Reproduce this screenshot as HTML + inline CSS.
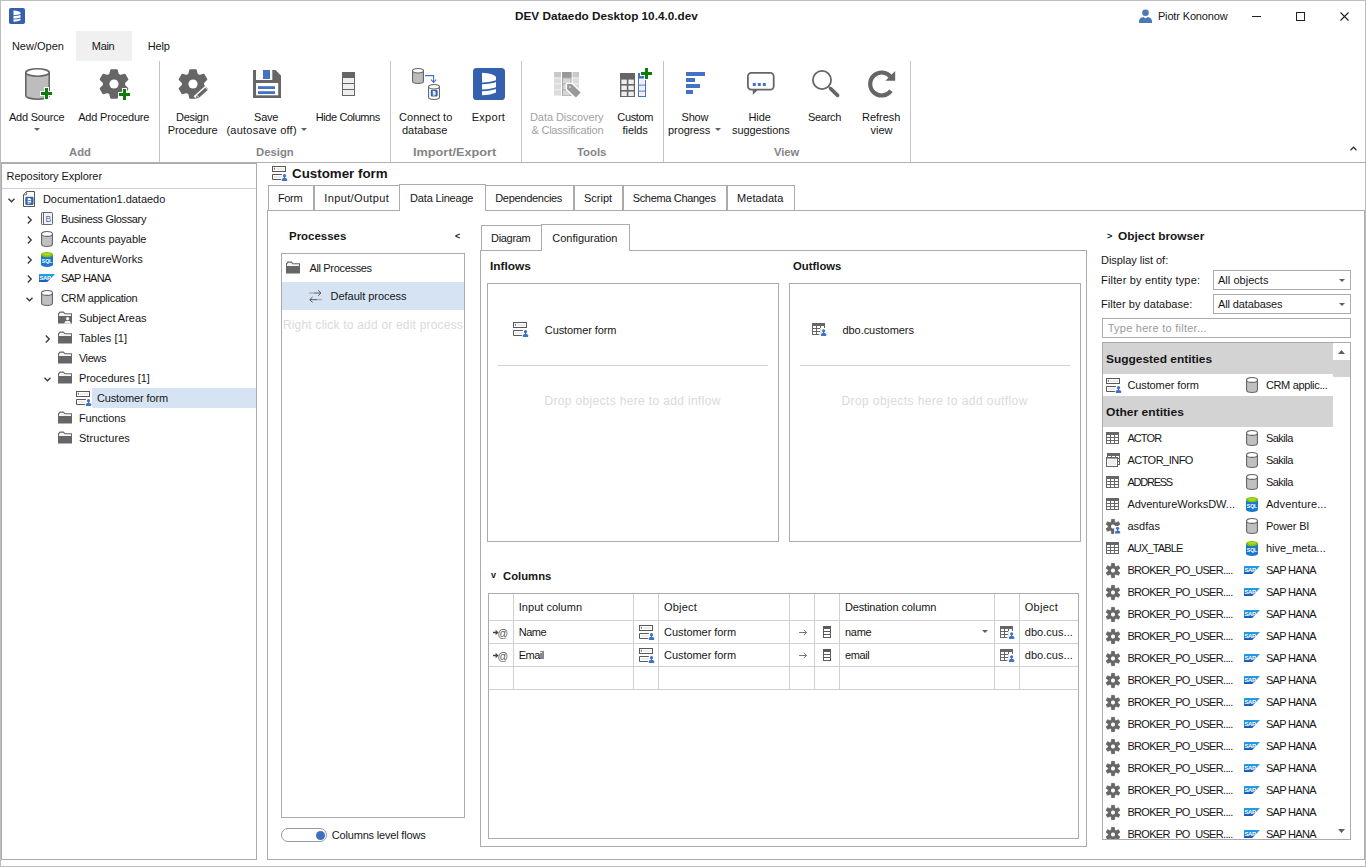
<!DOCTYPE html>
<html lang="en"><head><meta charset="utf-8"><title>DEV Dataedo Desktop 10.4.0.dev</title>
<style>
html,body{margin:0;padding:0;background:#fff;}
body{width:1366px;height:867px;position:relative;overflow:hidden;font-family:"Liberation Sans",sans-serif;font-size:11px;color:#161616;}
.a{position:absolute;}
.t{position:absolute;white-space:nowrap;line-height:13px;font-size:11px;}
.c{text-align:center;}
.b{font-weight:bold;}
.dis{color:#a2a2a2;}
.grp{color:#858585;}
.up{letter-spacing:-0.55px;}
svg{display:block;}
</style></head>
<body>
<div class="a" style="left:0px;top:0px;width:1366px;height:867px;background:#ffffff;border:1px solid #bdbdbd;box-sizing:border-box;"></div>
<svg style="position:absolute;left:9px;top:8px;overflow:visible" width="16" height="16" viewBox="0 0 16 16" ><g transform="scale(0.5)"><rect x="0" y="0" width="32" height="32" rx="3.6" fill="#3560ae"/><path fill="#fff" d="M9,4.8 Q20,5.4 23,8.8 L23,12.2 Q18,14 9,14.4 ZM9,16.2 Q18,16 23,14 L23,19.2 Q18,21.1 9,21.4 ZM9,23.2 Q18,23 23,21.1 L23,24.6 Q18,27 9,27.3 Z"/></g></svg>
<span class="t b" style="left:514.7px;top:10px;transform:scaleX(1.0674);transform-origin:0 0;">DEV Dataedo Desktop 10.4.0.dev</span>
<svg style="position:absolute;left:1139px;top:9px;overflow:visible" width="13" height="14" viewBox="0 0 13 14" ><circle cx="6.5" cy="3.8" r="3.3" fill="#4a7ab5"/><path d="M0,14 L13,14 L13,12 Q12.6,8.4 8.6,8 L6.5,9.6 L4.4,8 Q0.4,8.4 0,12 Z" fill="#4a7ab5"/></svg>
<span class="t " style="left:1157.9px;top:10px;letter-spacing:-0.146px;">Piotr Kononow</span>
<div class="a" style="left:1252px;top:16px;width:9px;height:1px;background:#222"></div>
<div class="a" style="left:1296px;top:12px;width:9px;height:9px;border:1px solid #222;box-sizing:border-box;"></div>
<svg style="position:absolute;left:1340px;top:12px;overflow:visible" width="9" height="9" viewBox="0 0 9 9" ><path d="M0.5,0.5 L8.5,8.5 M8.5,0.5 L0.5,8.5" stroke="#222" stroke-width="1.1" fill="none"/></svg>
<div class="a" style="left:76px;top:31px;width:56px;height:30px;background:#f0f0f0;"></div>
<span class="t " style="left:11.9px;top:40px;letter-spacing:0.002px;">New/Open</span>
<span class="t " style="left:91.8px;top:40px;letter-spacing:-0.315px;">Main</span>
<span class="t " style="left:147.7px;top:40px;letter-spacing:-0.108px;">Help</span>
<svg style="position:absolute;left:25px;top:68px;overflow:visible" width="25" height="32" viewBox="0 0 25 32" ><path d="M0.8,4.5 L0.8,27.5 A11.7,3.7 0 0 0 24.2,27.5 L24.2,4.5 Z" fill="#bdbdbd" stroke="#666666" stroke-width="1.6"/><ellipse cx="12.5" cy="4.5" rx="11.7" ry="3.7" fill="#fff" stroke="#666666" stroke-width="1.6"/><rect x="19.0" y="19" width="5" height="13" fill="#fff"/><rect x="15" y="23.0" width="13" height="5" fill="#fff"/><rect x="20.0" y="20" width="3" height="11" fill="#0b7d0b"/><rect x="16" y="24.0" width="11" height="3" fill="#0b7d0b"/></svg>
<svg style="position:absolute;left:100px;top:69px;overflow:visible" width="30" height="30" viewBox="0 0 30 30" ><path d="M9.95,5.42 L11.09,1.00 L16.91,1.00 L18.05,5.42 L20.27,6.70 L24.67,5.48 L27.58,10.52 L24.32,13.72 L24.32,16.28 L27.58,19.48 L24.67,24.52 L20.27,23.30 L18.05,24.58 L16.91,29.00 L11.09,29.00 L9.95,24.58 L7.73,23.30 L3.33,24.52 L0.42,19.48 L3.68,16.28 L3.68,13.72 L0.42,10.52 L3.33,5.48 L7.73,6.70 Z M18.60,15.00 A4.6,4.6 0 1 0 9.40,15.00 A4.6,4.6 0 1 0 18.60,15.00 Z" fill="#666666" fill-rule="evenodd" stroke="#666666" stroke-width="1.6" stroke-linejoin="round"/><circle cx="14" cy="15" r="4.6" fill="#fff"/><rect x="22.0" y="19" width="5" height="13" fill="#fff"/><rect x="18" y="23.0" width="13" height="5" fill="#fff"/><rect x="23.0" y="20" width="3" height="11" fill="#0b7d0b"/><rect x="19" y="24.0" width="11" height="3" fill="#0b7d0b"/></svg>
<svg style="position:absolute;left:179px;top:69px;overflow:visible" width="30" height="31" viewBox="0 0 30 31" ><path d="M9.95,5.42 L11.09,1.00 L16.91,1.00 L18.05,5.42 L20.27,6.70 L24.67,5.48 L27.58,10.52 L24.32,13.72 L24.32,16.28 L27.58,19.48 L24.67,24.52 L20.27,23.30 L18.05,24.58 L16.91,29.00 L11.09,29.00 L9.95,24.58 L7.73,23.30 L3.33,24.52 L0.42,19.48 L3.68,16.28 L3.68,13.72 L0.42,10.52 L3.33,5.48 L7.73,6.70 Z M18.60,15.00 A4.6,4.6 0 1 0 9.40,15.00 A4.6,4.6 0 1 0 18.60,15.00 Z" fill="#666666" fill-rule="evenodd" stroke="#666666" stroke-width="1.6" stroke-linejoin="round"/><circle cx="14" cy="15" r="4.6" fill="#fff"/><line x1="16.6" y1="29.4" x2="28.6" y2="18.8" stroke="#fff" stroke-width="6"/><line x1="19.2" y1="27.2" x2="28.2" y2="19.2" stroke="#666" stroke-width="3.4"/><path d="M16.4,29.8 L17.4,26.2 L20.4,29 Z" fill="#888"/><line x1="26.2" y1="18.2" x2="29.2" y2="21.4" stroke="#fff" stroke-width="0.8"/></svg>
<svg style="position:absolute;left:253px;top:70px;overflow:visible" width="28" height="28" viewBox="0 0 28 28" ><path d="M0,0 L3,0 L3,10 L19.3,10 L19.3,0 L22.5,0 L28,5.5 L28,28 L0,28 Z" fill="#666"/><rect x="10" y="0" width="7" height="9" fill="#4472c4"/><rect x="3" y="13" width="22.2" height="12.3" fill="#fff"/><rect x="5" y="16.2" width="17" height="2.8" fill="#4472c4"/><rect x="5" y="21.2" width="17" height="2.8" fill="#4472c4"/></svg>
<svg style="position:absolute;left:342px;top:72px;overflow:visible" width="13" height="24" viewBox="0 0 13 24" ><rect x="0" y="0" width="13" height="24" fill="#666"/><rect x="1" y="6" width="11" height="5" fill="#efefef"/><rect x="1" y="12" width="11" height="5" fill="#efefef"/><rect x="1" y="18" width="11" height="5" fill="#efefef"/></svg>
<svg style="position:absolute;left:412px;top:68px;overflow:visible" width="28" height="32" viewBox="0 0 28 32" ><g><path d="M0.55,2.75 L0.55,13.25 A5.45,2.2 0 0 0 11.45,13.25 L11.45,2.75 Z" fill="#bdbdbd" stroke="#666666" stroke-width="1.1"/><ellipse cx="6.0" cy="2.75" rx="5.45" ry="2.2" fill="#fff" stroke="#666666" stroke-width="1.1"/></g><path d="M13,7.6 L21.6,7.6 L21.6,14" fill="none" stroke="#4472c4" stroke-width="1.1"/><path d="M19,11.6 L21.6,14.4 L24.2,11.6" fill="none" stroke="#4472c4" stroke-width="1.1"/><g transform="translate(16,16)"><path d="M0.55,2.75 L0.55,13.25 A5.45,2.2 0 0 0 11.45,13.25 L11.45,2.75 Z" fill="#fff" stroke="#666666" stroke-width="1.1"/><ellipse cx="6.0" cy="2.75" rx="5.45" ry="2.2" fill="#fff" stroke="#666666" stroke-width="1.1"/><g transform="translate(2.8,5.8)"><g transform="scale(0.2125)"><rect x="0" y="0" width="32" height="32" rx="5" fill="#3560ae"/><path fill="#fff" d="M9,4.8 Q20,5.4 23,8.8 L23,12.2 Q18,14 9,14.4 ZM9,16.2 Q18,16 23,14 L23,19.2 Q18,21.1 9,21.4 ZM9,23.2 Q18,23 23,21.1 L23,24.6 Q18,27 9,27.3 Z"/></g></g></g></svg>
<svg style="position:absolute;left:473px;top:68px;overflow:visible" width="32" height="32" viewBox="0 0 32 32" ><g transform="scale(1.0)"><rect x="0" y="0" width="32" height="32" rx="3.6" fill="#3560ae"/><path fill="#fff" d="M9,4.8 Q20,5.4 23,8.8 L23,12.2 Q18,14 9,14.4 ZM9,16.2 Q18,16 23,14 L23,19.2 Q18,21.1 9,21.4 ZM9,23.2 Q18,23 23,21.1 L23,24.6 Q18,27 9,27.3 Z"/></g></svg>
<svg style="position:absolute;left:554px;top:72px;overflow:visible" width="28" height="27" viewBox="0 0 28 27" ><rect x="0" y="0" width="7" height="5.5" fill="#c9c9c9"/><rect x="0" y="6.2" width="7" height="5.4" fill="#dcdcdc"/><rect x="0" y="12.2" width="7" height="5.4" fill="#dcdcdc"/><rect x="0" y="18.2" width="7" height="5.4" fill="#dcdcdc"/><rect x="8" y="0" width="9.5" height="24" fill="#a8a8a8"/><rect x="8" y="0" width="9.5" height="5.5" fill="#999"/><rect x="9" y="6.4" width="7.5" height="5" fill="#d6d6d6"/><rect x="9" y="12.4" width="7.5" height="5" fill="#d6d6d6"/><rect x="9" y="18.4" width="7.5" height="5" fill="#d6d6d6"/><rect x="18.5" y="0" width="6.5" height="5.5" fill="#c9c9c9"/><rect x="18.5" y="6.2" width="6.5" height="5.4" fill="#dcdcdc"/><rect x="18.5" y="12.2" width="6.5" height="5.4" fill="#dcdcdc"/><rect x="18.5" y="18.2" width="6.5" height="5.4" fill="#dcdcdc"/><path d="M12.4,11.4 L18.2,11.4 L27.6,20.4 L22,26.4 L12.4,17.4 Z" fill="#999" stroke="#fff" stroke-width="1.4" stroke-linejoin="round"/><circle cx="16" cy="15" r="0.9" fill="#ddd"/></svg>
<svg style="position:absolute;left:620px;top:68px;overflow:visible" width="32" height="30" viewBox="0 0 32 30" ><rect x="0" y="5" width="15" height="24" fill="#666"/><rect x="1.4" y="11.6" width="5.4" height="4.4" fill="#efefef"/><rect x="8.4" y="11.6" width="5.4" height="4.4" fill="#efefef"/><rect x="1.4" y="17.6" width="5.4" height="4.4" fill="#efefef"/><rect x="8.4" y="17.6" width="5.4" height="4.4" fill="#efefef"/><rect x="1.4" y="23.6" width="5.4" height="4.4" fill="#efefef"/><rect x="8.4" y="23.6" width="5.4" height="4.4" fill="#efefef"/><rect x="18.5" y="5.5" width="7" height="23" fill="#fff" stroke="#4472c4" stroke-width="1"/><rect x="18" y="5" width="8" height="5.6" fill="#4472c4"/><rect x="19.6" y="12" width="4.8" height="4" fill="#efefef"/><rect x="18" y="16.6" width="8" height="1" fill="#4472c4"/><rect x="19.6" y="18" width="4.8" height="4" fill="#efefef"/><rect x="18" y="22.6" width="8" height="1" fill="#4472c4"/><rect x="19.6" y="24" width="4.8" height="4" fill="#efefef"/><rect x="24.0" y="-1" width="5" height="13" fill="#fff"/><rect x="20" y="3.0" width="13" height="5" fill="#fff"/><rect x="25.0" y="0" width="3" height="11" fill="#0b7d0b"/><rect x="21" y="4.0" width="11" height="3" fill="#0b7d0b"/></svg>
<svg style="position:absolute;left:686px;top:72px;overflow:visible" width="19" height="22" viewBox="0 0 19 22" ><rect x="0" y="0" width="19" height="4" fill="#4472c4"/><rect x="0" y="6" width="9" height="4" fill="#4472c4"/><rect x="0" y="12" width="14" height="4" fill="#4472c4"/><rect x="0" y="18" width="7" height="4" fill="#4472c4"/></svg>
<svg style="position:absolute;left:747px;top:72px;overflow:visible" width="28" height="24" viewBox="0 0 28 24" ><path d="M5.8,17.5 L5.8,23 L11.2,17.5" fill="#666"/><rect x="0.9" y="0.9" width="25.8" height="16.8" rx="3.4" fill="#fff" stroke="#666" stroke-width="1.8"/><rect x="5.8" y="11" width="3" height="3" fill="#4472c4"/><rect x="10.8" y="11" width="3" height="3" fill="#4472c4"/><rect x="15.8" y="11" width="3" height="3" fill="#4472c4"/></svg>
<svg style="position:absolute;left:812px;top:70px;overflow:visible" width="28" height="28" viewBox="0 0 28 28" ><circle cx="10" cy="10" r="9.1" fill="none" stroke="#666" stroke-width="1.8"/><line x1="17" y1="17" x2="18.5" y2="18.5" stroke="#666" stroke-width="1.8"/><line x1="18.6" y1="18.6" x2="25.6" y2="25.4" stroke="#666" stroke-width="3.6" stroke-linecap="round"/></svg>
<svg style="position:absolute;left:868px;top:70px;overflow:visible" width="28" height="28" viewBox="0 0 28 28" ><path d="M22.76,6.92 A11.5,11.5 0 1 0 23.00,20.76" fill="none" stroke="#666" stroke-width="4.2"/><path d="M27.2,1 L27.2,10.8 L17.4,10.8 Z" fill="#666"/></svg>
<span class="t " style="left:8.9px;top:111px;letter-spacing:-0.198px;">Add Source</span>
<span class="t " style="left:78.2px;top:111px;letter-spacing:-0.174px;">Add Procedure</span>
<span class="t " style="left:176.0px;top:111px;letter-spacing:-0.290px;">Design</span>
<span class="t " style="left:167.8px;top:124px;letter-spacing:-0.121px;">Procedure</span>
<span class="t " style="left:254.1px;top:111px;letter-spacing:-0.259px;">Save</span>
<span class="t " style="left:226.4px;top:124px;letter-spacing:0.241px;">(autosave off)</span>
<span class="t " style="left:315.8px;top:111px;letter-spacing:-0.418px;">Hide Columns</span>
<span class="t " style="left:399.1px;top:111px;letter-spacing:-0.000px;">Connect to</span>
<span class="t " style="left:402.0px;top:124px;letter-spacing:0.005px;">database</span>
<span class="t " style="left:471.7px;top:111px;letter-spacing:0.281px;">Export</span>
<span class="t dis" style="left:530.0px;top:111px;letter-spacing:-0.075px;">Data Discovery</span>
<span class="t dis" style="left:531.4px;top:124px;letter-spacing:-0.200px;">&amp; Classification</span>
<span class="t " style="left:617.3px;top:111px;letter-spacing:-0.341px;">Custom</span>
<span class="t " style="left:622.6px;top:124px;letter-spacing:-0.098px;">fields</span>
<span class="t " style="left:681.6px;top:111px;letter-spacing:-0.244px;">Show</span>
<span class="t " style="left:668.0px;top:124px;letter-spacing:-0.071px;">progress</span>
<span class="t " style="left:748.5px;top:111px;letter-spacing:-0.075px;">Hide</span>
<span class="t " style="left:732.0px;top:124px;letter-spacing:-0.102px;">suggestions</span>
<span class="t " style="left:808.0px;top:111px;letter-spacing:-0.292px;">Search</span>
<span class="t " style="left:862.0px;top:111px;letter-spacing:-0.022px;">Refresh</span>
<span class="t " style="left:870.4px;top:124px;letter-spacing:0.028px;">view</span>
<svg style="position:absolute;left:34px;top:128px;overflow:visible" width="6" height="3" viewBox="0 0 6 3" ><path d="M0,0 L6,0 L3.0,3 Z" fill="#606060"/></svg>
<svg style="position:absolute;left:301px;top:128px;overflow:visible" width="6" height="3" viewBox="0 0 6 3" ><path d="M0,0 L6,0 L3.0,3 Z" fill="#606060"/></svg>
<svg style="position:absolute;left:715px;top:128px;overflow:visible" width="6" height="3" viewBox="0 0 6 3" ><path d="M0,0 L6,0 L3.0,3 Z" fill="#606060"/></svg>
<span class="t b grp" style="left:68.6px;top:146px;transform:scaleX(1.0242);transform-origin:0 0;">Add</span>
<span class="t b grp" style="left:255.9px;top:146px;transform:scaleX(1.0278);transform-origin:0 0;">Design</span>
<span class="t b grp" style="left:413.4px;top:146px;transform:scaleX(1.1528);transform-origin:0 0;">Import/Export</span>
<span class="t b grp" style="left:577.2px;top:146px;transform:scaleX(1.0313);transform-origin:0 0;">Tools</span>
<span class="t b grp" style="left:773.9px;top:146px;transform:scaleX(1.0173);transform-origin:0 0;">View</span>
<div class="a" style="left:159px;top:61px;width:1px;height:101px;background:#c4c4c4"></div>
<div class="a" style="left:390px;top:61px;width:1px;height:101px;background:#c4c4c4"></div>
<div class="a" style="left:521px;top:61px;width:1px;height:101px;background:#c4c4c4"></div>
<div class="a" style="left:663px;top:61px;width:1px;height:101px;background:#c4c4c4"></div>
<div class="a" style="left:910px;top:61px;width:1px;height:101px;background:#c4c4c4"></div>
<svg style="position:absolute;left:1349.5px;top:146px;overflow:visible" width="7" height="5" viewBox="0 0 7 5" ><path d="M0.5,4.2 L3.5,1.2 L6.5,4.2" fill="none" stroke="#333" stroke-width="1.3"/></svg>
<div class="a" style="left:0px;top:162px;width:1366px;height:1px;background:#b0b0b0"></div>
<div class="a" style="left:1px;top:163px;width:256px;height:697px;background:#fff;border:1px solid #ababab;box-sizing:border-box;"></div>
<span class="t " style="left:6.6px;top:170px;letter-spacing:-0.061px;">Repository Explorer</span>
<div class="a" style="left:2px;top:188px;width:254px;height:1px;background:#cfcfcf"></div>
<svg style="position:absolute;left:7.5px;top:198.2px;overflow:visible" width="7" height="5" viewBox="0 0 7 5" ><path d="M0.5,0.8 L3.5,3.8 L6.5,0.8" fill="none" stroke="#383838" stroke-width="1.35"/></svg>
<svg style="position:absolute;left:23px;top:191px;overflow:visible" width="12" height="16" viewBox="0 0 12 16" ><path d="M3.6,0.5 L11.5,0.5 L11.5,15.5 L0.5,15.5 L0.5,3.8 Z" fill="#fff" stroke="#555" stroke-width="1"/><path d="M0.5,3.8 L3.6,3.8 L3.6,0.5" fill="none" stroke="#555" stroke-width="0.8"/><g transform="translate(2.3,5.8)"><g transform="scale(0.25625)"><rect x="0" y="0" width="32" height="32" rx="5" fill="#3560ae"/><path fill="#fff" d="M9,4.8 Q20,5.4 23,8.8 L23,12.2 Q18,14 9,14.4 ZM9,16.2 Q18,16 23,14 L23,19.2 Q18,21.1 9,21.4 ZM9,23.2 Q18,23 23,21.1 L23,24.6 Q18,27 9,27.3 Z"/></g></g></svg>
<span class="t " style="left:42.9px;top:193px;letter-spacing:-0.026px;">Documentation1.dataedo</span>
<svg style="position:absolute;left:27px;top:216px;overflow:visible" width="5" height="8" viewBox="0 0 5 8" ><path d="M0.8,0.6 L4.2,4 L0.8,7.4" fill="none" stroke="#383838" stroke-width="1.35"/></svg>
<svg style="position:absolute;left:41px;top:212px;overflow:visible" width="12" height="13" viewBox="0 0 12 13" ><rect x="0.5" y="0.5" width="11" height="12" rx="0.8" fill="#f2f2f2" stroke="#666" stroke-width="1"/><line x1="2.5" y1="0.5" x2="2.5" y2="12.5" stroke="#666" stroke-width="1"/><text x="7.2" y="9.6" font-family="Liberation Sans, sans-serif" font-size="8.4" fill="#3d6cc0" text-anchor="middle">B</text></svg>
<span class="t " style="left:60.9px;top:213px;letter-spacing:-0.350px;">Business Glossary</span>
<svg style="position:absolute;left:27px;top:236px;overflow:visible" width="5" height="8" viewBox="0 0 5 8" ><path d="M0.8,0.6 L4.2,4 L0.8,7.4" fill="none" stroke="#383838" stroke-width="1.35"/></svg>
<svg style="position:absolute;left:41px;top:231px;overflow:visible" width="12" height="16" viewBox="0 0 12 16" ><path d="M0.55,2.95 L0.55,13.049999999999999 A5.45,2.4 0 0 0 11.45,13.049999999999999 L11.45,2.95 Z" fill="#c0c0c0" stroke="#666666" stroke-width="1.1"/><ellipse cx="6.0" cy="2.95" rx="5.45" ry="2.4" fill="#fff" stroke="#666666" stroke-width="1.1"/></svg>
<span class="t " style="left:60.9px;top:233px;letter-spacing:-0.090px;">Accounts payable</span>
<svg style="position:absolute;left:27px;top:256px;overflow:visible" width="5" height="8" viewBox="0 0 5 8" ><path d="M0.8,0.6 L4.2,4 L0.8,7.4" fill="none" stroke="#383838" stroke-width="1.35"/></svg>
<svg style="position:absolute;left:41px;top:252px;overflow:visible" width="12" height="15" viewBox="0 0 12 15" ><path d="M0,2.6 L0,12.4 A6,2.6 0 0 0 12,12.4 L12,2.6 Z" fill="#1a78cf"/><ellipse cx="6" cy="2.6" rx="6" ry="2.6" fill="#86c400"/><ellipse cx="6" cy="2.3" rx="4" ry="1.3" fill="#a5d82a"/><text x="6" y="10.6" font-family="Liberation Sans, sans-serif" font-size="5.2" font-weight="bold" fill="#fff" text-anchor="middle" letter-spacing="-0.1">SQL</text></svg>
<span class="t " style="left:60.9px;top:253px;letter-spacing:0.061px;">AdventureWorks</span>
<svg style="position:absolute;left:27px;top:275px;overflow:visible" width="5" height="8" viewBox="0 0 5 8" ><path d="M0.8,0.6 L4.2,4 L0.8,7.4" fill="none" stroke="#383838" stroke-width="1.35"/></svg>
<svg style="position:absolute;left:39px;top:274px;overflow:visible" width="16" height="8" viewBox="0 0 16 8" ><linearGradient id="sg1" x1="0" y1="0" x2="0" y2="1"><stop offset="0" stop-color="#22a5e8"/><stop offset="1" stop-color="#1a56b4"/></linearGradient><path d="M0,0 L16,0 L8.2,8 L0,8 Z" fill="url(#sg1)"/><text x="0.6" y="6.4" font-family="Liberation Sans, sans-serif" font-size="6" font-weight="bold" fill="#fff" letter-spacing="-0.5">SAP</text></svg>
<span class="t " style="left:60.9px;top:272px;letter-spacing:-0.720px;">SAP HANA</span>
<svg style="position:absolute;left:25.5px;top:297.2px;overflow:visible" width="7" height="5" viewBox="0 0 7 5" ><path d="M0.5,0.8 L3.5,3.8 L6.5,0.8" fill="none" stroke="#383838" stroke-width="1.35"/></svg>
<svg style="position:absolute;left:41px;top:290px;overflow:visible" width="12" height="16" viewBox="0 0 12 16" ><path d="M0.55,2.95 L0.55,13.049999999999999 A5.45,2.4 0 0 0 11.45,13.049999999999999 L11.45,2.95 Z" fill="#c0c0c0" stroke="#666666" stroke-width="1.1"/><ellipse cx="6.0" cy="2.95" rx="5.45" ry="2.4" fill="#fff" stroke="#666666" stroke-width="1.1"/></svg>
<span class="t " style="left:60.9px;top:292px;letter-spacing:-0.286px;">CRM application</span>
<svg style="position:absolute;left:58px;top:311px;overflow:visible" width="14" height="13" viewBox="0 0 14 13" ><path d="M0,2.6 L1.8,0.6 L5.6,0.6 L7.2,2.2 L14,2.2 L14,12.6 L0,12.6 Z" fill="#666"/><path d="M1,3.2 L2.3,1.7 L5.2,1.7 L6.8,3.3 L13,3.3 L13,4.9 L1,4.9 Z" fill="#f4f4f4"/><circle cx="9.6" cy="7.6" r="1.7" fill="#f4f4f4"/><path d="M6.6,12.6 L12.6,12.6 L12.6,11.6 Q12.4,9.8 9.6,9.7 Q6.8,9.8 6.6,11.6 Z" fill="#f4f4f4"/></svg>
<span class="t " style="left:78.9px;top:312px;letter-spacing:-0.023px;">Subject Areas</span>
<svg style="position:absolute;left:45px;top:335px;overflow:visible" width="5" height="8" viewBox="0 0 5 8" ><path d="M0.8,0.6 L4.2,4 L0.8,7.4" fill="none" stroke="#383838" stroke-width="1.35"/></svg>
<svg style="position:absolute;left:58px;top:331px;overflow:visible" width="14" height="13" viewBox="0 0 14 13" ><path d="M0,2.6 L1.8,0.6 L5.6,0.6 L7.2,2.2 L14,2.2 L14,12.6 L0,12.6 Z" fill="#666"/><path d="M1,3.2 L2.3,1.7 L5.2,1.7 L6.8,3.3 L13,3.3 L13,4.9 L1,4.9 Z" fill="#f4f4f4"/></svg>
<span class="t " style="left:78.9px;top:332px;letter-spacing:0.123px;">Tables [1]</span>
<svg style="position:absolute;left:58px;top:351px;overflow:visible" width="14" height="13" viewBox="0 0 14 13" ><path d="M0,2.6 L1.8,0.6 L5.6,0.6 L7.2,2.2 L14,2.2 L14,12.6 L0,12.6 Z" fill="#666"/><path d="M1,3.2 L2.3,1.7 L5.2,1.7 L6.8,3.3 L13,3.3 L13,4.9 L1,4.9 Z" fill="#f4f4f4"/></svg>
<span class="t " style="left:78.9px;top:352px;letter-spacing:-0.414px;">Views</span>
<svg style="position:absolute;left:43.5px;top:377.2px;overflow:visible" width="7" height="5" viewBox="0 0 7 5" ><path d="M0.5,0.8 L3.5,3.8 L6.5,0.8" fill="none" stroke="#383838" stroke-width="1.35"/></svg>
<svg style="position:absolute;left:58px;top:371px;overflow:visible" width="14" height="13" viewBox="0 0 14 13" ><path d="M0,2.6 L1.8,0.6 L5.6,0.6 L7.2,2.2 L14,2.2 L14,12.6 L0,12.6 Z" fill="#666"/><path d="M1,3.2 L2.3,1.7 L5.2,1.7 L6.8,3.3 L13,3.3 L13,4.9 L1,4.9 Z" fill="#f4f4f4"/></svg>
<span class="t " style="left:78.9px;top:372px;letter-spacing:-0.050px;">Procedures [1]</span>
<div class="a" style="left:92px;top:388px;width:164px;height:20px;background:#d5e3f2;"></div>
<svg style="position:absolute;left:76px;top:391px;overflow:visible" width="16" height="16" viewBox="0 0 16 16" ><rect x="0.5" y="0.5" width="13" height="5" fill="#fff" stroke="#595959" stroke-width="1"/><rect x="4" y="2" width="8" height="2" fill="#ececec"/><rect x="1.9" y="1.8" width="0.9" height="1.9" fill="#444"/><rect x="2" y="10" width="7.4" height="2" fill="#ececec"/><path d="M9.9,8.5 L0.5,8.5 L0.5,13.5 L8.9,13.5" fill="none" stroke="#595959" stroke-width="1"/><circle cx="12.5" cy="9.68" r="1.61" fill="#3f72c9"/><rect x="11.90" y="10.80" width="1.2" height="2.10" fill="#3f72c9"/><path d="M9.9,15 L15.100000000000001,15 L15.100000000000001,13.18 Q15.100000000000001,11.92 12.5,11.78 Q9.9,11.92 9.9,13.18 Z" fill="#3f72c9"/></svg>
<span class="t " style="left:96.9px;top:392px;letter-spacing:-0.112px;">Customer form</span>
<svg style="position:absolute;left:58px;top:411px;overflow:visible" width="14" height="13" viewBox="0 0 14 13" ><path d="M0,2.6 L1.8,0.6 L5.6,0.6 L7.2,2.2 L14,2.2 L14,12.6 L0,12.6 Z" fill="#666"/><path d="M1,3.2 L2.3,1.7 L5.2,1.7 L6.8,3.3 L13,3.3 L13,4.9 L1,4.9 Z" fill="#f4f4f4"/></svg>
<span class="t " style="left:78.9px;top:412px;letter-spacing:-0.113px;">Functions</span>
<svg style="position:absolute;left:58px;top:431px;overflow:visible" width="14" height="13" viewBox="0 0 14 13" ><path d="M0,2.6 L1.8,0.6 L5.6,0.6 L7.2,2.2 L14,2.2 L14,12.6 L0,12.6 Z" fill="#666"/><path d="M1,3.2 L2.3,1.7 L5.2,1.7 L6.8,3.3 L13,3.3 L13,4.9 L1,4.9 Z" fill="#f4f4f4"/></svg>
<span class="t " style="left:78.9px;top:432px;letter-spacing:0.095px;">Structures</span>
<svg style="position:absolute;left:272px;top:166px;overflow:visible" width="16" height="16" viewBox="0 0 16 16" ><rect x="0.5" y="0.5" width="13" height="5" fill="#fff" stroke="#595959" stroke-width="1"/><rect x="4" y="2" width="8" height="2" fill="#ececec"/><rect x="1.9" y="1.8" width="0.9" height="1.9" fill="#444"/><rect x="2" y="10" width="7.4" height="2" fill="#ececec"/><path d="M9.9,8.5 L0.5,8.5 L0.5,13.5 L8.9,13.5" fill="none" stroke="#595959" stroke-width="1"/><circle cx="12.5" cy="9.68" r="1.61" fill="#3f72c9"/><rect x="11.90" y="10.80" width="1.2" height="2.10" fill="#3f72c9"/><path d="M9.9,15 L15.100000000000001,15 L15.100000000000001,13.18 Q15.100000000000001,11.92 12.5,11.78 Q9.9,11.92 9.9,13.18 Z" fill="#3f72c9"/></svg>
<span class="t b" style="left:291.6px;top:167px;font-size:12px;line-height:14px;transform:scaleX(1.1118);transform-origin:0 0;">Customer form</span>
<div class="a" style="left:267px;top:210px;width:1098px;height:650px;background:#fff;border:1px solid #ababab;box-sizing:border-box;"></div>
<div class="a" style="left:268px;top:185px;width:46px;height:26px;background:#fff;border:1px solid #ababab;box-sizing:border-box;"></div>
<span class="t " style="left:278.0px;top:192px;letter-spacing:-0.357px;">Form</span>
<div class="a" style="left:314px;top:185px;width:86px;height:26px;background:#fff;border:1px solid #ababab;box-sizing:border-box;"></div>
<span class="t " style="left:324.3px;top:192px;letter-spacing:0.359px;">Input/Output</span>
<div class="a" style="left:485px;top:185px;width:89px;height:26px;background:#fff;border:1px solid #ababab;box-sizing:border-box;"></div>
<span class="t " style="left:495.2px;top:192px;letter-spacing:-0.286px;">Dependencies</span>
<div class="a" style="left:574px;top:185px;width:49px;height:26px;background:#fff;border:1px solid #ababab;box-sizing:border-box;"></div>
<span class="t " style="left:583.9px;top:192px;letter-spacing:0.015px;">Script</span>
<div class="a" style="left:623px;top:185px;width:104px;height:26px;background:#fff;border:1px solid #ababab;box-sizing:border-box;"></div>
<span class="t " style="left:632.7px;top:192px;letter-spacing:-0.327px;">Schema Changes</span>
<div class="a" style="left:727px;top:185px;width:68px;height:26px;background:#fff;border:1px solid #ababab;box-sizing:border-box;"></div>
<span class="t " style="left:737.1px;top:192px;letter-spacing:0.046px;">Metadata</span>
<div class="a" style="left:399px;top:184px;width:87px;height:27px;background:#fff;border:1px solid #ababab;box-sizing:border-box;border-bottom:none;"></div>
<span class="t " style="left:410.1px;top:192px;letter-spacing:-0.187px;">Data Lineage</span>
<span class="t b" style="left:289.4px;top:230px;transform:scaleX(1.0412);transform-origin:0 0;">Processes</span>
<span class="t b" style="left:455.0px;top:230px;font-size:9px">&lt;</span>
<div class="a" style="left:281px;top:253px;width:184px;height:565px;background:#fff;border:1px solid #ababab;box-sizing:border-box;"></div>
<svg style="position:absolute;left:286px;top:261px;overflow:visible" width="14" height="13" viewBox="0 0 14 13" ><path d="M0,2.6 L1.8,0.6 L5.6,0.6 L7.2,2.2 L14,2.2 L14,12.6 L0,12.6 Z" fill="#666"/><path d="M1,3.2 L2.3,1.7 L5.2,1.7 L6.8,3.3 L13,3.3 L13,4.9 L1,4.9 Z" fill="#f4f4f4"/></svg>
<span class="t " style="left:309.4px;top:262px;letter-spacing:-0.328px;">All Processes</span>
<div class="a" style="left:282px;top:282px;width:182px;height:28px;background:#d5e3f2;"></div>
<svg style="position:absolute;left:308.5px;top:290px;overflow:visible" width="13" height="13" viewBox="0 0 13 13" ><path d="M4.5,3 L12,3 M9.2,0.3 L12,3 L9.2,5.7" fill="none" stroke="#5a5a5a" stroke-width="1"/><path d="M0.5,3 L1.5,3 M2.5,3 L3.5,3 M9.5,9.7 L10.5,9.7 M11.5,9.7 L12.5,9.7" stroke="#5a5a5a" stroke-width="1"/><path d="M8.5,9.7 L0.8,9.7 M3.6,7 L0.8,9.7 L3.6,12.4" fill="none" stroke="#5a5a5a" stroke-width="1"/></svg>
<span class="t " style="left:330.5px;top:290px;letter-spacing:-0.024px;">Default process</span>
<span class="t " style="left:282.9px;top:318px;font-size:12px;line-height:14px;color:#dadada;letter-spacing:0.199px;">Right click to add or edit process</span>
<div class="a" style="left:281px;top:828px;width:46px;height:14px;border:1px solid #9a9a9a;border-radius:7px;box-sizing:border-box;background:#fff"></div>
<div class="a" style="left:315.5px;top:830.7px;width:9px;height:9px;border-radius:4.5px;background:#3f6fc0"></div>
<span class="t " style="left:331.8px;top:829px;letter-spacing:-0.184px;">Columns level flows</span>
<div class="a" style="left:480px;top:250px;width:607px;height:597px;background:#fff;border:1px solid #ababab;box-sizing:border-box;"></div>
<div class="a" style="left:481px;top:225px;width:61px;height:26px;background:#fff;border:1px solid #ababab;box-sizing:border-box;"></div>
<span class="t " style="left:491.1px;top:232px;letter-spacing:-0.330px;">Diagram</span>
<div class="a" style="left:541px;top:224px;width:89px;height:27px;background:#fff;border:1px solid #ababab;box-sizing:border-box;border-bottom:none;"></div>
<span class="t " style="left:552.3px;top:232px;letter-spacing:-0.020px;">Configuration</span>
<span class="t b" style="left:489.7px;top:260px;transform:scaleX(1.0801);transform-origin:0 0;">Inflows</span>
<span class="t b" style="left:792.9px;top:260px;transform:scaleX(1.0286);transform-origin:0 0;">Outflows</span>
<div class="a" style="left:487px;top:283px;width:292px;height:259px;background:#fff;border:1px solid #ababab;box-sizing:border-box;"></div>
<div class="a" style="left:789px;top:283px;width:292px;height:259px;background:#fff;border:1px solid #ababab;box-sizing:border-box;"></div>
<svg style="position:absolute;left:513px;top:322px;overflow:visible" width="16" height="16" viewBox="0 0 16 16" ><rect x="0.5" y="0.5" width="13" height="5" fill="#fff" stroke="#595959" stroke-width="1"/><rect x="4" y="2" width="8" height="2" fill="#ececec"/><rect x="1.9" y="1.8" width="0.9" height="1.9" fill="#444"/><rect x="2" y="10" width="7.4" height="2" fill="#ececec"/><path d="M9.9,8.5 L0.5,8.5 L0.5,13.5 L8.9,13.5" fill="none" stroke="#595959" stroke-width="1"/><circle cx="12.5" cy="9.68" r="1.61" fill="#3f72c9"/><rect x="11.90" y="10.80" width="1.2" height="2.10" fill="#3f72c9"/><path d="M9.9,15 L15.100000000000001,15 L15.100000000000001,13.18 Q15.100000000000001,11.92 12.5,11.78 Q9.9,11.92 9.9,13.18 Z" fill="#3f72c9"/></svg>
<span class="t " style="left:544.8px;top:324px;letter-spacing:-0.087px;">Customer form</span>
<div class="a" style="left:498px;top:365px;width:270px;height:1px;background:#d0d0d0"></div>
<span class="t " style="left:544.4px;top:394px;font-size:12px;line-height:14px;color:#dadada;letter-spacing:0.352px;">Drop objects here to add inflow</span>
<svg style="position:absolute;left:812px;top:323px;overflow:visible" width="15" height="13" viewBox="0 0 15 13" ><rect x="0" y="0" width="13" height="12" fill="#666"/><rect x="1" y="3" width="3" height="2" fill="#fff"/><rect x="5" y="3" width="3" height="2" fill="#fff"/><rect x="9" y="3" width="3" height="2" fill="#fff"/><rect x="1" y="6" width="3" height="2" fill="#fff"/><rect x="5" y="6" width="3" height="2" fill="#fff"/><rect x="9" y="6" width="3" height="2" fill="#fff"/><rect x="1" y="9" width="3" height="2" fill="#fff"/><rect x="5" y="9" width="3" height="2" fill="#fff"/><rect x="9" y="9" width="3" height="2" fill="#fff"/><rect x="8.2" y="5" width="7" height="8.2" fill="#fff"/><rect x="7.4" y="9.6" width="1" height="3" fill="#fff"/><circle cx="11.6" cy="7.76" r="1.61" fill="#3f72c9"/><rect x="11.00" y="8.86" width="1.2" height="2.07" fill="#3f72c9"/><path d="M9,13.0 L14.2,13.0 L14.2,11.21 Q14.2,9.96 11.6,9.83 Q9,9.96 9,11.21 Z" fill="#3f72c9"/></svg>
<span class="t " style="left:842.5px;top:324px;letter-spacing:-0.063px;">dbo.customers</span>
<div class="a" style="left:800px;top:365px;width:270px;height:1px;background:#d0d0d0"></div>
<span class="t " style="left:841.4px;top:394px;font-size:12px;line-height:14px;color:#dadada;letter-spacing:0.426px;">Drop objects here to add outflow</span>
<span class="t b" style="left:491.0px;top:569px;font-size:9px;">v</span>
<span class="t b" style="left:502.6px;top:570px;transform:scaleX(1.0265);transform-origin:0 0;">Columns</span>
<div class="a" style="left:488px;top:593px;width:591px;height:246px;background:#fff;border:1px solid #ababab;box-sizing:border-box;"></div>
<div class="a" style="left:489px;top:620px;width:589px;height:1px;background:#d0d0d0"></div>
<div class="a" style="left:489px;top:643px;width:589px;height:1px;background:#d0d0d0"></div>
<div class="a" style="left:489px;top:666px;width:589px;height:1px;background:#d0d0d0"></div>
<div class="a" style="left:489px;top:689px;width:589px;height:1px;background:#d0d0d0"></div>
<div class="a" style="left:513px;top:594px;width:1px;height:96px;background:#d0d0d0"></div>
<div class="a" style="left:633px;top:594px;width:1px;height:96px;background:#d0d0d0"></div>
<div class="a" style="left:658px;top:594px;width:1px;height:96px;background:#d0d0d0"></div>
<div class="a" style="left:789px;top:594px;width:1px;height:96px;background:#d0d0d0"></div>
<div class="a" style="left:814px;top:594px;width:1px;height:96px;background:#d0d0d0"></div>
<div class="a" style="left:839px;top:594px;width:1px;height:96px;background:#d0d0d0"></div>
<div class="a" style="left:994px;top:594px;width:1px;height:96px;background:#d0d0d0"></div>
<div class="a" style="left:1019px;top:594px;width:1px;height:96px;background:#d0d0d0"></div>
<span class="t " style="left:518.8px;top:601px;letter-spacing:0.020px;">Input column</span>
<span class="t " style="left:664.0px;top:601px;letter-spacing:0.221px;">Object</span>
<span class="t " style="left:844.9px;top:601px;letter-spacing:-0.127px;">Destination column</span>
<span class="t " style="left:1024.8px;top:601px;letter-spacing:0.261px;">Object</span>
<svg style="position:absolute;left:492.5px;top:629px;overflow:visible" width="6" height="7" viewBox="0 0 6 7" ><path d="M0,3.5 L3.4,3.5" fill="none" stroke="#444" stroke-width="1.5"/><path d="M2.6,0.8 L5.6,3.5 L2.6,6.2 Z" fill="#444"/></svg>
<span class="t " style="left:497.6px;top:627px;font-size:10.5px;color:#555;">@</span>
<span class="t " style="left:518.8px;top:626px;letter-spacing:-0.548px;">Name</span>
<svg style="position:absolute;left:639px;top:625px;overflow:visible" width="16" height="16" viewBox="0 0 16 16" ><rect x="0.5" y="0.5" width="13" height="5" fill="#fff" stroke="#595959" stroke-width="1"/><rect x="4" y="2" width="8" height="2" fill="#ececec"/><rect x="1.9" y="1.8" width="0.9" height="1.9" fill="#444"/><rect x="2" y="10" width="7.4" height="2" fill="#ececec"/><path d="M9.9,8.5 L0.5,8.5 L0.5,13.5 L8.9,13.5" fill="none" stroke="#595959" stroke-width="1"/><circle cx="12.5" cy="9.68" r="1.61" fill="#3f72c9"/><rect x="11.90" y="10.80" width="1.2" height="2.10" fill="#3f72c9"/><path d="M9.9,15 L15.100000000000001,15 L15.100000000000001,13.18 Q15.100000000000001,11.92 12.5,11.78 Q9.9,11.92 9.9,13.18 Z" fill="#3f72c9"/></svg>
<span class="t " style="left:664.0px;top:626px;letter-spacing:-0.054px;">Customer form</span>
<svg style="position:absolute;left:798.5px;top:629px;overflow:visible" width="8" height="7" viewBox="0 0 8 7" ><path d="M0,3.5 L7.6,3.5 M4.9,0.8 L7.6,3.5 L4.9,6.2" fill="none" stroke="#777" stroke-width="1"/></svg>
<svg style="position:absolute;left:823px;top:626px;overflow:visible" width="8" height="12" viewBox="0 0 8 12" ><rect x="0" y="0" width="8" height="12" fill="#5a5a5a"/><rect x="1" y="3" width="6" height="2" fill="#fff"/><rect x="1" y="6" width="6" height="2" fill="#fff"/><rect x="1" y="9" width="6" height="2" fill="#fff"/></svg>
<span class="t " style="left:844.9px;top:626px;letter-spacing:-0.244px;">name</span>
<svg style="position:absolute;left:1000px;top:626px;overflow:visible" width="15" height="13" viewBox="0 0 15 13" ><rect x="0" y="0" width="13" height="12" fill="#666"/><rect x="1" y="3" width="3" height="2" fill="#fff"/><rect x="5" y="3" width="3" height="2" fill="#fff"/><rect x="9" y="3" width="3" height="2" fill="#fff"/><rect x="1" y="6" width="3" height="2" fill="#fff"/><rect x="5" y="6" width="3" height="2" fill="#fff"/><rect x="9" y="6" width="3" height="2" fill="#fff"/><rect x="1" y="9" width="3" height="2" fill="#fff"/><rect x="5" y="9" width="3" height="2" fill="#fff"/><rect x="9" y="9" width="3" height="2" fill="#fff"/><rect x="8.2" y="5" width="7" height="8.2" fill="#fff"/><rect x="7.4" y="9.6" width="1" height="3" fill="#fff"/><circle cx="11.6" cy="7.76" r="1.61" fill="#3f72c9"/><rect x="11.00" y="8.86" width="1.2" height="2.07" fill="#3f72c9"/><path d="M9,13.0 L14.2,13.0 L14.2,11.21 Q14.2,9.96 11.6,9.83 Q9,9.96 9,11.21 Z" fill="#3f72c9"/></svg>
<span class="t " style="left:1024.8px;top:626px;letter-spacing:0.033px;">dbo.cus...</span>
<svg style="position:absolute;left:492.5px;top:652px;overflow:visible" width="6" height="7" viewBox="0 0 6 7" ><path d="M0,3.5 L3.4,3.5" fill="none" stroke="#444" stroke-width="1.5"/><path d="M2.6,0.8 L5.6,3.5 L2.6,6.2 Z" fill="#444"/></svg>
<span class="t " style="left:497.6px;top:650px;font-size:10.5px;color:#555;">@</span>
<span class="t " style="left:518.8px;top:649px;letter-spacing:-0.529px;">Email</span>
<svg style="position:absolute;left:639px;top:648px;overflow:visible" width="16" height="16" viewBox="0 0 16 16" ><rect x="0.5" y="0.5" width="13" height="5" fill="#fff" stroke="#595959" stroke-width="1"/><rect x="4" y="2" width="8" height="2" fill="#ececec"/><rect x="1.9" y="1.8" width="0.9" height="1.9" fill="#444"/><rect x="2" y="10" width="7.4" height="2" fill="#ececec"/><path d="M9.9,8.5 L0.5,8.5 L0.5,13.5 L8.9,13.5" fill="none" stroke="#595959" stroke-width="1"/><circle cx="12.5" cy="9.68" r="1.61" fill="#3f72c9"/><rect x="11.90" y="10.80" width="1.2" height="2.10" fill="#3f72c9"/><path d="M9.9,15 L15.100000000000001,15 L15.100000000000001,13.18 Q15.100000000000001,11.92 12.5,11.78 Q9.9,11.92 9.9,13.18 Z" fill="#3f72c9"/></svg>
<span class="t " style="left:664.0px;top:649px;letter-spacing:-0.054px;">Customer form</span>
<svg style="position:absolute;left:798.5px;top:652px;overflow:visible" width="8" height="7" viewBox="0 0 8 7" ><path d="M0,3.5 L7.6,3.5 M4.9,0.8 L7.6,3.5 L4.9,6.2" fill="none" stroke="#777" stroke-width="1"/></svg>
<svg style="position:absolute;left:823px;top:649px;overflow:visible" width="8" height="12" viewBox="0 0 8 12" ><rect x="0" y="0" width="8" height="12" fill="#5a5a5a"/><rect x="1" y="3" width="6" height="2" fill="#fff"/><rect x="1" y="6" width="6" height="2" fill="#fff"/><rect x="1" y="9" width="6" height="2" fill="#fff"/></svg>
<span class="t " style="left:844.9px;top:649px;letter-spacing:-0.349px;">email</span>
<svg style="position:absolute;left:1000px;top:649px;overflow:visible" width="15" height="13" viewBox="0 0 15 13" ><rect x="0" y="0" width="13" height="12" fill="#666"/><rect x="1" y="3" width="3" height="2" fill="#fff"/><rect x="5" y="3" width="3" height="2" fill="#fff"/><rect x="9" y="3" width="3" height="2" fill="#fff"/><rect x="1" y="6" width="3" height="2" fill="#fff"/><rect x="5" y="6" width="3" height="2" fill="#fff"/><rect x="9" y="6" width="3" height="2" fill="#fff"/><rect x="1" y="9" width="3" height="2" fill="#fff"/><rect x="5" y="9" width="3" height="2" fill="#fff"/><rect x="9" y="9" width="3" height="2" fill="#fff"/><rect x="8.2" y="5" width="7" height="8.2" fill="#fff"/><rect x="7.4" y="9.6" width="1" height="3" fill="#fff"/><circle cx="11.6" cy="7.76" r="1.61" fill="#3f72c9"/><rect x="11.00" y="8.86" width="1.2" height="2.07" fill="#3f72c9"/><path d="M9,13.0 L14.2,13.0 L14.2,11.21 Q14.2,9.96 11.6,9.83 Q9,9.96 9,11.21 Z" fill="#3f72c9"/></svg>
<span class="t " style="left:1024.8px;top:649px;letter-spacing:0.033px;">dbo.cus...</span>
<svg style="position:absolute;left:982px;top:630px;overflow:visible" width="6" height="3" viewBox="0 0 6 3" ><path d="M0,0 L6,0 L3.0,3 Z" fill="#606060"/></svg>
<span class="t b" style="left:1107.0px;top:230px;font-size:9px">&gt;</span>
<span class="t b" style="left:1118.4px;top:230px;transform:scaleX(1.0780);transform-origin:0 0;">Object browser</span>
<span class="t " style="left:1101.0px;top:254px;letter-spacing:-0.044px;">Display list of:</span>
<span class="t " style="left:1101.0px;top:274px;letter-spacing:0.173px;">Filter by entity type:</span>
<span class="t " style="left:1101.0px;top:298px;letter-spacing:0.044px;">Filter by database:</span>
<div class="a" style="left:1213px;top:270px;width:138px;height:20px;background:#fff;border:1px solid #ababab;box-sizing:border-box;"></div>
<span class="t " style="left:1218.0px;top:274px;letter-spacing:0.026px;">All objects</span>
<svg style="position:absolute;left:1339px;top:279px;overflow:visible" width="6" height="3" viewBox="0 0 6 3" ><path d="M0,0 L6,0 L3.0,3 Z" fill="#606060"/></svg>
<div class="a" style="left:1213px;top:294px;width:138px;height:20px;background:#fff;border:1px solid #ababab;box-sizing:border-box;"></div>
<span class="t " style="left:1218.0px;top:298px;letter-spacing:-0.129px;">All databases</span>
<svg style="position:absolute;left:1339px;top:303px;overflow:visible" width="6" height="3" viewBox="0 0 6 3" ><path d="M0,0 L6,0 L3.0,3 Z" fill="#606060"/></svg>
<div class="a" style="left:1102px;top:318px;width:249px;height:20px;background:#fff;border:1px solid #ababab;box-sizing:border-box;"></div>
<span class="t " style="left:1107.7px;top:322px;color:#9a9a9a;letter-spacing:0.254px;">Type here to filter...</span>
<div class="a" style="left:1102px;top:342px;width:249px;height:498px;background:#fff;border:1px solid #ababab;box-sizing:border-box;"></div>
<div class="a" style="left:1103px;top:343px;width:230px;height:31px;background:#d3d3d3;"></div>
<span class="t b" style="left:1105.6px;top:353px;transform:scaleX(1.0841);transform-origin:0 0;">Suggested entities</span>
<div class="a" style="left:1103px;top:396px;width:230px;height:31px;background:#d3d3d3;"></div>
<span class="t b" style="left:1105.6px;top:406px;transform:scaleX(1.0991);transform-origin:0 0;">Other entities</span>
<svg style="position:absolute;left:1338px;top:350px;overflow:visible" width="7" height="4" viewBox="0 0 7 4" ><path d="M0,4 L7,4 L3.5,0 Z" fill="#606060"/></svg>
<div class="a" style="left:1333px;top:360px;width:17px;height:17px;background:#d3d3d3;"></div>
<svg style="position:absolute;left:1338px;top:829px;overflow:visible" width="7" height="4" viewBox="0 0 7 4" ><path d="M0,0 L7,0 L3.5,4 Z" fill="#606060"/></svg>
<svg style="position:absolute;left:1106px;top:378px;overflow:visible" width="16" height="16" viewBox="0 0 16 16" ><rect x="0.5" y="0.5" width="13" height="5" fill="#fff" stroke="#595959" stroke-width="1"/><rect x="4" y="2" width="8" height="2" fill="#ececec"/><rect x="1.9" y="1.8" width="0.9" height="1.9" fill="#444"/><rect x="2" y="10" width="7.4" height="2" fill="#ececec"/><path d="M9.9,8.5 L0.5,8.5 L0.5,13.5 L8.9,13.5" fill="none" stroke="#595959" stroke-width="1"/><circle cx="12.5" cy="9.68" r="1.61" fill="#3f72c9"/><rect x="11.90" y="10.80" width="1.2" height="2.10" fill="#3f72c9"/><path d="M9.9,15 L15.100000000000001,15 L15.100000000000001,13.18 Q15.100000000000001,11.92 12.5,11.78 Q9.9,11.92 9.9,13.18 Z" fill="#3f72c9"/></svg>
<span class="t " style="left:1127.4px;top:379px;letter-spacing:-0.104px;">Customer form</span>
<svg style="position:absolute;left:1246px;top:377px;overflow:visible" width="12" height="16" viewBox="0 0 12 16" ><path d="M0.55,2.95 L0.55,13.049999999999999 A5.45,2.4 0 0 0 11.45,13.049999999999999 L11.45,2.95 Z" fill="#c0c0c0" stroke="#666666" stroke-width="1.1"/><ellipse cx="6.0" cy="2.95" rx="5.45" ry="2.4" fill="#fff" stroke="#666666" stroke-width="1.1"/></svg>
<span class="t " style="left:1265.9px;top:379px;letter-spacing:-0.336px;">CRM applic...</span>
<div class="a" style="left:1103px;top:427px;width:230px;height:412px;overflow:hidden"><div class="a" style="left:-1103px;top:-427px">
<svg style="position:absolute;left:1106px;top:432px;overflow:visible" width="13" height="12" viewBox="0 0 13 12" ><rect x="0" y="0" width="13" height="12" fill="#666"/><rect x="1" y="3" width="3" height="2" fill="#fff"/><rect x="5" y="3" width="3" height="2" fill="#fff"/><rect x="9" y="3" width="3" height="2" fill="#fff"/><rect x="1" y="6" width="3" height="2" fill="#fff"/><rect x="5" y="6" width="3" height="2" fill="#fff"/><rect x="9" y="6" width="3" height="2" fill="#fff"/><rect x="1" y="9" width="3" height="2" fill="#fff"/><rect x="5" y="9" width="3" height="2" fill="#fff"/><rect x="9" y="9" width="3" height="2" fill="#fff"/></svg>
<span class="t " style="left:1127.4px;top:432px;letter-spacing:-0.903px;">ACTOR</span>
<svg style="position:absolute;left:1246px;top:430px;overflow:visible" width="12" height="16" viewBox="0 0 12 16" ><path d="M0.55,2.95 L0.55,13.049999999999999 A5.45,2.4 0 0 0 11.45,13.049999999999999 L11.45,2.95 Z" fill="#c0c0c0" stroke="#666666" stroke-width="1.1"/><ellipse cx="6.0" cy="2.95" rx="5.45" ry="2.4" fill="#fff" stroke="#666666" stroke-width="1.1"/></svg>
<span class="t " style="left:1265.9px;top:432px;letter-spacing:-0.494px;">Sakila</span>
<svg style="position:absolute;left:1106px;top:453px;overflow:visible" width="14" height="14" viewBox="0 0 14 14" ><rect x="1" y="0" width="13" height="12" fill="#666"/><rect x="2" y="3" width="3" height="2" fill="#fff"/><rect x="6" y="3" width="3" height="2" fill="#fff"/><rect x="10" y="3" width="3" height="2" fill="#fff"/><rect x="2" y="6" width="3" height="2" fill="#fff"/><rect x="6" y="6" width="3" height="2" fill="#fff"/><rect x="10" y="6" width="3" height="2" fill="#fff"/><rect x="2" y="9" width="3" height="2" fill="#fff"/><rect x="6" y="9" width="3" height="2" fill="#fff"/><rect x="10" y="9" width="3" height="2" fill="#fff"/><rect x="0" y="4" width="12" height="10" fill="#666"/><rect x="1" y="5.6" width="10" height="7.4" fill="#fff"/><rect x="2" y="6.6" width="8" height="5.4" fill="#eeeeee"/></svg>
<span class="t " style="left:1127.4px;top:454px;letter-spacing:-0.523px;">ACTOR_INFO</span>
<svg style="position:absolute;left:1246px;top:452px;overflow:visible" width="12" height="16" viewBox="0 0 12 16" ><path d="M0.55,2.95 L0.55,13.049999999999999 A5.45,2.4 0 0 0 11.45,13.049999999999999 L11.45,2.95 Z" fill="#c0c0c0" stroke="#666666" stroke-width="1.1"/><ellipse cx="6.0" cy="2.95" rx="5.45" ry="2.4" fill="#fff" stroke="#666666" stroke-width="1.1"/></svg>
<span class="t " style="left:1265.9px;top:454px;letter-spacing:-0.494px;">Sakila</span>
<svg style="position:absolute;left:1106px;top:476px;overflow:visible" width="13" height="12" viewBox="0 0 13 12" ><rect x="0" y="0" width="13" height="12" fill="#666"/><rect x="1" y="3" width="3" height="2" fill="#fff"/><rect x="5" y="3" width="3" height="2" fill="#fff"/><rect x="9" y="3" width="3" height="2" fill="#fff"/><rect x="1" y="6" width="3" height="2" fill="#fff"/><rect x="5" y="6" width="3" height="2" fill="#fff"/><rect x="9" y="6" width="3" height="2" fill="#fff"/><rect x="1" y="9" width="3" height="2" fill="#fff"/><rect x="5" y="9" width="3" height="2" fill="#fff"/><rect x="9" y="9" width="3" height="2" fill="#fff"/></svg>
<span class="t " style="left:1127.4px;top:476px;letter-spacing:-1.231px;">ADDRESS</span>
<svg style="position:absolute;left:1246px;top:474px;overflow:visible" width="12" height="16" viewBox="0 0 12 16" ><path d="M0.55,2.95 L0.55,13.049999999999999 A5.45,2.4 0 0 0 11.45,13.049999999999999 L11.45,2.95 Z" fill="#c0c0c0" stroke="#666666" stroke-width="1.1"/><ellipse cx="6.0" cy="2.95" rx="5.45" ry="2.4" fill="#fff" stroke="#666666" stroke-width="1.1"/></svg>
<span class="t " style="left:1265.9px;top:476px;letter-spacing:-0.494px;">Sakila</span>
<svg style="position:absolute;left:1106px;top:498px;overflow:visible" width="13" height="12" viewBox="0 0 13 12" ><rect x="0" y="0" width="13" height="12" fill="#666"/><rect x="1" y="3" width="3" height="2" fill="#fff"/><rect x="5" y="3" width="3" height="2" fill="#fff"/><rect x="9" y="3" width="3" height="2" fill="#fff"/><rect x="1" y="6" width="3" height="2" fill="#fff"/><rect x="5" y="6" width="3" height="2" fill="#fff"/><rect x="9" y="6" width="3" height="2" fill="#fff"/><rect x="1" y="9" width="3" height="2" fill="#fff"/><rect x="5" y="9" width="3" height="2" fill="#fff"/><rect x="9" y="9" width="3" height="2" fill="#fff"/></svg>
<span class="t " style="left:1127.4px;top:498px;letter-spacing:-0.022px;">AdventureWorksDW...</span>
<svg style="position:absolute;left:1246px;top:497px;overflow:visible" width="12" height="15" viewBox="0 0 12 15" ><path d="M0,2.6 L0,12.4 A6,2.6 0 0 0 12,12.4 L12,2.6 Z" fill="#1a78cf"/><ellipse cx="6" cy="2.6" rx="6" ry="2.6" fill="#86c400"/><ellipse cx="6" cy="2.3" rx="4" ry="1.3" fill="#a5d82a"/><text x="6" y="10.6" font-family="Liberation Sans, sans-serif" font-size="5.2" font-weight="bold" fill="#fff" text-anchor="middle" letter-spacing="-0.1">SQL</text></svg>
<span class="t " style="left:1265.9px;top:498px;letter-spacing:0.125px;">Adventure...</span>
<svg style="position:absolute;left:1106px;top:518.5px;overflow:visible" width="14" height="15" viewBox="0 0 14 15" ><path d="M5.17,3.17 L5.55,0.35 L8.45,0.35 L8.83,3.17 L9.83,3.75 L12.47,2.67 L13.92,5.18 L11.66,6.92 L11.66,8.08 L13.92,9.82 L12.47,12.33 L9.83,11.25 L8.83,11.83 L8.45,14.65 L5.55,14.65 L5.17,11.83 L4.17,11.25 L1.53,12.33 L0.08,9.82 L2.34,8.08 L2.34,6.92 L0.08,5.18 L1.53,2.67 L4.17,3.75 Z M9.00,7.50 A2.0,2.0 0 1 0 5.00,7.50 A2.0,2.0 0 1 0 9.00,7.50 Z" fill="#666666" fill-rule="evenodd" stroke="#666666" stroke-width="0.7" stroke-linejoin="round"/><circle cx="7" cy="7.5" r="2.0" fill="#fff"/><rect x="8.2" y="7" width="7" height="9" fill="#fff"/><circle cx="11.6" cy="9.28" r="1.61" fill="#3f72c9"/><rect x="11.00" y="10.40" width="1.2" height="2.10" fill="#3f72c9"/><path d="M9,14.6 L14.2,14.6 L14.2,12.78 Q14.2,11.52 11.6,11.38 Q9,11.52 9,12.78 Z" fill="#3f72c9"/></svg>
<span class="t " style="left:1127.4px;top:520px;letter-spacing:0.016px;">asdfas</span>
<svg style="position:absolute;left:1246px;top:518px;overflow:visible" width="12" height="16" viewBox="0 0 12 16" ><path d="M0.55,2.95 L0.55,13.049999999999999 A5.45,2.4 0 0 0 11.45,13.049999999999999 L11.45,2.95 Z" fill="#c0c0c0" stroke="#666666" stroke-width="1.1"/><ellipse cx="6.0" cy="2.95" rx="5.45" ry="2.4" fill="#fff" stroke="#666666" stroke-width="1.1"/></svg>
<span class="t " style="left:1265.9px;top:520px;letter-spacing:-0.163px;">Power BI</span>
<svg style="position:absolute;left:1106px;top:542px;overflow:visible" width="13" height="12" viewBox="0 0 13 12" ><rect x="0" y="0" width="13" height="12" fill="#666"/><rect x="1" y="3" width="3" height="2" fill="#fff"/><rect x="5" y="3" width="3" height="2" fill="#fff"/><rect x="9" y="3" width="3" height="2" fill="#fff"/><rect x="1" y="6" width="3" height="2" fill="#fff"/><rect x="5" y="6" width="3" height="2" fill="#fff"/><rect x="9" y="6" width="3" height="2" fill="#fff"/><rect x="1" y="9" width="3" height="2" fill="#fff"/><rect x="5" y="9" width="3" height="2" fill="#fff"/><rect x="9" y="9" width="3" height="2" fill="#fff"/></svg>
<span class="t " style="left:1127.4px;top:542px;letter-spacing:-0.860px;">AUX_TABLE</span>
<svg style="position:absolute;left:1246px;top:541px;overflow:visible" width="12" height="15" viewBox="0 0 12 15" ><path d="M0,2.6 L0,12.4 A6,2.6 0 0 0 12,12.4 L12,2.6 Z" fill="#1a78cf"/><ellipse cx="6" cy="2.6" rx="6" ry="2.6" fill="#86c400"/><ellipse cx="6" cy="2.3" rx="4" ry="1.3" fill="#a5d82a"/><text x="6" y="10.6" font-family="Liberation Sans, sans-serif" font-size="5.2" font-weight="bold" fill="#fff" text-anchor="middle" letter-spacing="-0.1">SQL</text></svg>
<span class="t " style="left:1265.9px;top:542px;letter-spacing:-0.002px;">hive_meta...</span>
<svg style="position:absolute;left:1106px;top:562.5px;overflow:visible" width="14" height="15" viewBox="0 0 14 15" ><path d="M5.17,3.17 L5.55,0.35 L8.45,0.35 L8.83,3.17 L9.83,3.75 L12.47,2.67 L13.92,5.18 L11.66,6.92 L11.66,8.08 L13.92,9.82 L12.47,12.33 L9.83,11.25 L8.83,11.83 L8.45,14.65 L5.55,14.65 L5.17,11.83 L4.17,11.25 L1.53,12.33 L0.08,9.82 L2.34,8.08 L2.34,6.92 L0.08,5.18 L1.53,2.67 L4.17,3.75 Z M9.00,7.50 A2.0,2.0 0 1 0 5.00,7.50 A2.0,2.0 0 1 0 9.00,7.50 Z" fill="#666666" fill-rule="evenodd" stroke="#666666" stroke-width="0.7" stroke-linejoin="round"/><circle cx="7" cy="7.5" r="2.0" fill="#fff"/></svg>
<span class="t " style="left:1127.4px;top:564px;letter-spacing:-0.681px;">BROKER_PO_USER....</span>
<svg style="position:absolute;left:1244px;top:566px;overflow:visible" width="16" height="8" viewBox="0 0 16 8" ><linearGradient id="sg2" x1="0" y1="0" x2="0" y2="1"><stop offset="0" stop-color="#22a5e8"/><stop offset="1" stop-color="#1a56b4"/></linearGradient><path d="M0,0 L16,0 L8.2,8 L0,8 Z" fill="url(#sg2)"/><text x="0.6" y="6.4" font-family="Liberation Sans, sans-serif" font-size="6" font-weight="bold" fill="#fff" letter-spacing="-0.5">SAP</text></svg>
<span class="t " style="left:1265.9px;top:564px;letter-spacing:-0.691px;">SAP HANA</span>
<svg style="position:absolute;left:1106px;top:584.5px;overflow:visible" width="14" height="15" viewBox="0 0 14 15" ><path d="M5.17,3.17 L5.55,0.35 L8.45,0.35 L8.83,3.17 L9.83,3.75 L12.47,2.67 L13.92,5.18 L11.66,6.92 L11.66,8.08 L13.92,9.82 L12.47,12.33 L9.83,11.25 L8.83,11.83 L8.45,14.65 L5.55,14.65 L5.17,11.83 L4.17,11.25 L1.53,12.33 L0.08,9.82 L2.34,8.08 L2.34,6.92 L0.08,5.18 L1.53,2.67 L4.17,3.75 Z M9.00,7.50 A2.0,2.0 0 1 0 5.00,7.50 A2.0,2.0 0 1 0 9.00,7.50 Z" fill="#666666" fill-rule="evenodd" stroke="#666666" stroke-width="0.7" stroke-linejoin="round"/><circle cx="7" cy="7.5" r="2.0" fill="#fff"/></svg>
<span class="t " style="left:1127.4px;top:586px;letter-spacing:-0.681px;">BROKER_PO_USER....</span>
<svg style="position:absolute;left:1244px;top:588px;overflow:visible" width="16" height="8" viewBox="0 0 16 8" ><linearGradient id="sg3" x1="0" y1="0" x2="0" y2="1"><stop offset="0" stop-color="#22a5e8"/><stop offset="1" stop-color="#1a56b4"/></linearGradient><path d="M0,0 L16,0 L8.2,8 L0,8 Z" fill="url(#sg3)"/><text x="0.6" y="6.4" font-family="Liberation Sans, sans-serif" font-size="6" font-weight="bold" fill="#fff" letter-spacing="-0.5">SAP</text></svg>
<span class="t " style="left:1265.9px;top:586px;letter-spacing:-0.691px;">SAP HANA</span>
<svg style="position:absolute;left:1106px;top:606.5px;overflow:visible" width="14" height="15" viewBox="0 0 14 15" ><path d="M5.17,3.17 L5.55,0.35 L8.45,0.35 L8.83,3.17 L9.83,3.75 L12.47,2.67 L13.92,5.18 L11.66,6.92 L11.66,8.08 L13.92,9.82 L12.47,12.33 L9.83,11.25 L8.83,11.83 L8.45,14.65 L5.55,14.65 L5.17,11.83 L4.17,11.25 L1.53,12.33 L0.08,9.82 L2.34,8.08 L2.34,6.92 L0.08,5.18 L1.53,2.67 L4.17,3.75 Z M9.00,7.50 A2.0,2.0 0 1 0 5.00,7.50 A2.0,2.0 0 1 0 9.00,7.50 Z" fill="#666666" fill-rule="evenodd" stroke="#666666" stroke-width="0.7" stroke-linejoin="round"/><circle cx="7" cy="7.5" r="2.0" fill="#fff"/></svg>
<span class="t " style="left:1127.4px;top:608px;letter-spacing:-0.681px;">BROKER_PO_USER....</span>
<svg style="position:absolute;left:1244px;top:610px;overflow:visible" width="16" height="8" viewBox="0 0 16 8" ><linearGradient id="sg4" x1="0" y1="0" x2="0" y2="1"><stop offset="0" stop-color="#22a5e8"/><stop offset="1" stop-color="#1a56b4"/></linearGradient><path d="M0,0 L16,0 L8.2,8 L0,8 Z" fill="url(#sg4)"/><text x="0.6" y="6.4" font-family="Liberation Sans, sans-serif" font-size="6" font-weight="bold" fill="#fff" letter-spacing="-0.5">SAP</text></svg>
<span class="t " style="left:1265.9px;top:608px;letter-spacing:-0.691px;">SAP HANA</span>
<svg style="position:absolute;left:1106px;top:628.5px;overflow:visible" width="14" height="15" viewBox="0 0 14 15" ><path d="M5.17,3.17 L5.55,0.35 L8.45,0.35 L8.83,3.17 L9.83,3.75 L12.47,2.67 L13.92,5.18 L11.66,6.92 L11.66,8.08 L13.92,9.82 L12.47,12.33 L9.83,11.25 L8.83,11.83 L8.45,14.65 L5.55,14.65 L5.17,11.83 L4.17,11.25 L1.53,12.33 L0.08,9.82 L2.34,8.08 L2.34,6.92 L0.08,5.18 L1.53,2.67 L4.17,3.75 Z M9.00,7.50 A2.0,2.0 0 1 0 5.00,7.50 A2.0,2.0 0 1 0 9.00,7.50 Z" fill="#666666" fill-rule="evenodd" stroke="#666666" stroke-width="0.7" stroke-linejoin="round"/><circle cx="7" cy="7.5" r="2.0" fill="#fff"/></svg>
<span class="t " style="left:1127.4px;top:630px;letter-spacing:-0.681px;">BROKER_PO_USER....</span>
<svg style="position:absolute;left:1244px;top:632px;overflow:visible" width="16" height="8" viewBox="0 0 16 8" ><linearGradient id="sg5" x1="0" y1="0" x2="0" y2="1"><stop offset="0" stop-color="#22a5e8"/><stop offset="1" stop-color="#1a56b4"/></linearGradient><path d="M0,0 L16,0 L8.2,8 L0,8 Z" fill="url(#sg5)"/><text x="0.6" y="6.4" font-family="Liberation Sans, sans-serif" font-size="6" font-weight="bold" fill="#fff" letter-spacing="-0.5">SAP</text></svg>
<span class="t " style="left:1265.9px;top:630px;letter-spacing:-0.691px;">SAP HANA</span>
<svg style="position:absolute;left:1106px;top:650.5px;overflow:visible" width="14" height="15" viewBox="0 0 14 15" ><path d="M5.17,3.17 L5.55,0.35 L8.45,0.35 L8.83,3.17 L9.83,3.75 L12.47,2.67 L13.92,5.18 L11.66,6.92 L11.66,8.08 L13.92,9.82 L12.47,12.33 L9.83,11.25 L8.83,11.83 L8.45,14.65 L5.55,14.65 L5.17,11.83 L4.17,11.25 L1.53,12.33 L0.08,9.82 L2.34,8.08 L2.34,6.92 L0.08,5.18 L1.53,2.67 L4.17,3.75 Z M9.00,7.50 A2.0,2.0 0 1 0 5.00,7.50 A2.0,2.0 0 1 0 9.00,7.50 Z" fill="#666666" fill-rule="evenodd" stroke="#666666" stroke-width="0.7" stroke-linejoin="round"/><circle cx="7" cy="7.5" r="2.0" fill="#fff"/></svg>
<span class="t " style="left:1127.4px;top:652px;letter-spacing:-0.681px;">BROKER_PO_USER....</span>
<svg style="position:absolute;left:1244px;top:654px;overflow:visible" width="16" height="8" viewBox="0 0 16 8" ><linearGradient id="sg6" x1="0" y1="0" x2="0" y2="1"><stop offset="0" stop-color="#22a5e8"/><stop offset="1" stop-color="#1a56b4"/></linearGradient><path d="M0,0 L16,0 L8.2,8 L0,8 Z" fill="url(#sg6)"/><text x="0.6" y="6.4" font-family="Liberation Sans, sans-serif" font-size="6" font-weight="bold" fill="#fff" letter-spacing="-0.5">SAP</text></svg>
<span class="t " style="left:1265.9px;top:652px;letter-spacing:-0.691px;">SAP HANA</span>
<svg style="position:absolute;left:1106px;top:672.5px;overflow:visible" width="14" height="15" viewBox="0 0 14 15" ><path d="M5.17,3.17 L5.55,0.35 L8.45,0.35 L8.83,3.17 L9.83,3.75 L12.47,2.67 L13.92,5.18 L11.66,6.92 L11.66,8.08 L13.92,9.82 L12.47,12.33 L9.83,11.25 L8.83,11.83 L8.45,14.65 L5.55,14.65 L5.17,11.83 L4.17,11.25 L1.53,12.33 L0.08,9.82 L2.34,8.08 L2.34,6.92 L0.08,5.18 L1.53,2.67 L4.17,3.75 Z M9.00,7.50 A2.0,2.0 0 1 0 5.00,7.50 A2.0,2.0 0 1 0 9.00,7.50 Z" fill="#666666" fill-rule="evenodd" stroke="#666666" stroke-width="0.7" stroke-linejoin="round"/><circle cx="7" cy="7.5" r="2.0" fill="#fff"/></svg>
<span class="t " style="left:1127.4px;top:674px;letter-spacing:-0.681px;">BROKER_PO_USER....</span>
<svg style="position:absolute;left:1244px;top:676px;overflow:visible" width="16" height="8" viewBox="0 0 16 8" ><linearGradient id="sg7" x1="0" y1="0" x2="0" y2="1"><stop offset="0" stop-color="#22a5e8"/><stop offset="1" stop-color="#1a56b4"/></linearGradient><path d="M0,0 L16,0 L8.2,8 L0,8 Z" fill="url(#sg7)"/><text x="0.6" y="6.4" font-family="Liberation Sans, sans-serif" font-size="6" font-weight="bold" fill="#fff" letter-spacing="-0.5">SAP</text></svg>
<span class="t " style="left:1265.9px;top:674px;letter-spacing:-0.691px;">SAP HANA</span>
<svg style="position:absolute;left:1106px;top:694.5px;overflow:visible" width="14" height="15" viewBox="0 0 14 15" ><path d="M5.17,3.17 L5.55,0.35 L8.45,0.35 L8.83,3.17 L9.83,3.75 L12.47,2.67 L13.92,5.18 L11.66,6.92 L11.66,8.08 L13.92,9.82 L12.47,12.33 L9.83,11.25 L8.83,11.83 L8.45,14.65 L5.55,14.65 L5.17,11.83 L4.17,11.25 L1.53,12.33 L0.08,9.82 L2.34,8.08 L2.34,6.92 L0.08,5.18 L1.53,2.67 L4.17,3.75 Z M9.00,7.50 A2.0,2.0 0 1 0 5.00,7.50 A2.0,2.0 0 1 0 9.00,7.50 Z" fill="#666666" fill-rule="evenodd" stroke="#666666" stroke-width="0.7" stroke-linejoin="round"/><circle cx="7" cy="7.5" r="2.0" fill="#fff"/></svg>
<span class="t " style="left:1127.4px;top:696px;letter-spacing:-0.681px;">BROKER_PO_USER....</span>
<svg style="position:absolute;left:1244px;top:698px;overflow:visible" width="16" height="8" viewBox="0 0 16 8" ><linearGradient id="sg8" x1="0" y1="0" x2="0" y2="1"><stop offset="0" stop-color="#22a5e8"/><stop offset="1" stop-color="#1a56b4"/></linearGradient><path d="M0,0 L16,0 L8.2,8 L0,8 Z" fill="url(#sg8)"/><text x="0.6" y="6.4" font-family="Liberation Sans, sans-serif" font-size="6" font-weight="bold" fill="#fff" letter-spacing="-0.5">SAP</text></svg>
<span class="t " style="left:1265.9px;top:696px;letter-spacing:-0.691px;">SAP HANA</span>
<svg style="position:absolute;left:1106px;top:716.5px;overflow:visible" width="14" height="15" viewBox="0 0 14 15" ><path d="M5.17,3.17 L5.55,0.35 L8.45,0.35 L8.83,3.17 L9.83,3.75 L12.47,2.67 L13.92,5.18 L11.66,6.92 L11.66,8.08 L13.92,9.82 L12.47,12.33 L9.83,11.25 L8.83,11.83 L8.45,14.65 L5.55,14.65 L5.17,11.83 L4.17,11.25 L1.53,12.33 L0.08,9.82 L2.34,8.08 L2.34,6.92 L0.08,5.18 L1.53,2.67 L4.17,3.75 Z M9.00,7.50 A2.0,2.0 0 1 0 5.00,7.50 A2.0,2.0 0 1 0 9.00,7.50 Z" fill="#666666" fill-rule="evenodd" stroke="#666666" stroke-width="0.7" stroke-linejoin="round"/><circle cx="7" cy="7.5" r="2.0" fill="#fff"/></svg>
<span class="t " style="left:1127.4px;top:718px;letter-spacing:-0.681px;">BROKER_PO_USER....</span>
<svg style="position:absolute;left:1244px;top:720px;overflow:visible" width="16" height="8" viewBox="0 0 16 8" ><linearGradient id="sg9" x1="0" y1="0" x2="0" y2="1"><stop offset="0" stop-color="#22a5e8"/><stop offset="1" stop-color="#1a56b4"/></linearGradient><path d="M0,0 L16,0 L8.2,8 L0,8 Z" fill="url(#sg9)"/><text x="0.6" y="6.4" font-family="Liberation Sans, sans-serif" font-size="6" font-weight="bold" fill="#fff" letter-spacing="-0.5">SAP</text></svg>
<span class="t " style="left:1265.9px;top:718px;letter-spacing:-0.691px;">SAP HANA</span>
<svg style="position:absolute;left:1106px;top:738.5px;overflow:visible" width="14" height="15" viewBox="0 0 14 15" ><path d="M5.17,3.17 L5.55,0.35 L8.45,0.35 L8.83,3.17 L9.83,3.75 L12.47,2.67 L13.92,5.18 L11.66,6.92 L11.66,8.08 L13.92,9.82 L12.47,12.33 L9.83,11.25 L8.83,11.83 L8.45,14.65 L5.55,14.65 L5.17,11.83 L4.17,11.25 L1.53,12.33 L0.08,9.82 L2.34,8.08 L2.34,6.92 L0.08,5.18 L1.53,2.67 L4.17,3.75 Z M9.00,7.50 A2.0,2.0 0 1 0 5.00,7.50 A2.0,2.0 0 1 0 9.00,7.50 Z" fill="#666666" fill-rule="evenodd" stroke="#666666" stroke-width="0.7" stroke-linejoin="round"/><circle cx="7" cy="7.5" r="2.0" fill="#fff"/></svg>
<span class="t " style="left:1127.4px;top:740px;letter-spacing:-0.681px;">BROKER_PO_USER....</span>
<svg style="position:absolute;left:1244px;top:742px;overflow:visible" width="16" height="8" viewBox="0 0 16 8" ><linearGradient id="sg10" x1="0" y1="0" x2="0" y2="1"><stop offset="0" stop-color="#22a5e8"/><stop offset="1" stop-color="#1a56b4"/></linearGradient><path d="M0,0 L16,0 L8.2,8 L0,8 Z" fill="url(#sg10)"/><text x="0.6" y="6.4" font-family="Liberation Sans, sans-serif" font-size="6" font-weight="bold" fill="#fff" letter-spacing="-0.5">SAP</text></svg>
<span class="t " style="left:1265.9px;top:740px;letter-spacing:-0.691px;">SAP HANA</span>
<svg style="position:absolute;left:1106px;top:760.5px;overflow:visible" width="14" height="15" viewBox="0 0 14 15" ><path d="M5.17,3.17 L5.55,0.35 L8.45,0.35 L8.83,3.17 L9.83,3.75 L12.47,2.67 L13.92,5.18 L11.66,6.92 L11.66,8.08 L13.92,9.82 L12.47,12.33 L9.83,11.25 L8.83,11.83 L8.45,14.65 L5.55,14.65 L5.17,11.83 L4.17,11.25 L1.53,12.33 L0.08,9.82 L2.34,8.08 L2.34,6.92 L0.08,5.18 L1.53,2.67 L4.17,3.75 Z M9.00,7.50 A2.0,2.0 0 1 0 5.00,7.50 A2.0,2.0 0 1 0 9.00,7.50 Z" fill="#666666" fill-rule="evenodd" stroke="#666666" stroke-width="0.7" stroke-linejoin="round"/><circle cx="7" cy="7.5" r="2.0" fill="#fff"/></svg>
<span class="t " style="left:1127.4px;top:762px;letter-spacing:-0.681px;">BROKER_PO_USER....</span>
<svg style="position:absolute;left:1244px;top:764px;overflow:visible" width="16" height="8" viewBox="0 0 16 8" ><linearGradient id="sg11" x1="0" y1="0" x2="0" y2="1"><stop offset="0" stop-color="#22a5e8"/><stop offset="1" stop-color="#1a56b4"/></linearGradient><path d="M0,0 L16,0 L8.2,8 L0,8 Z" fill="url(#sg11)"/><text x="0.6" y="6.4" font-family="Liberation Sans, sans-serif" font-size="6" font-weight="bold" fill="#fff" letter-spacing="-0.5">SAP</text></svg>
<span class="t " style="left:1265.9px;top:762px;letter-spacing:-0.691px;">SAP HANA</span>
<svg style="position:absolute;left:1106px;top:782.5px;overflow:visible" width="14" height="15" viewBox="0 0 14 15" ><path d="M5.17,3.17 L5.55,0.35 L8.45,0.35 L8.83,3.17 L9.83,3.75 L12.47,2.67 L13.92,5.18 L11.66,6.92 L11.66,8.08 L13.92,9.82 L12.47,12.33 L9.83,11.25 L8.83,11.83 L8.45,14.65 L5.55,14.65 L5.17,11.83 L4.17,11.25 L1.53,12.33 L0.08,9.82 L2.34,8.08 L2.34,6.92 L0.08,5.18 L1.53,2.67 L4.17,3.75 Z M9.00,7.50 A2.0,2.0 0 1 0 5.00,7.50 A2.0,2.0 0 1 0 9.00,7.50 Z" fill="#666666" fill-rule="evenodd" stroke="#666666" stroke-width="0.7" stroke-linejoin="round"/><circle cx="7" cy="7.5" r="2.0" fill="#fff"/></svg>
<span class="t " style="left:1127.4px;top:784px;letter-spacing:-0.681px;">BROKER_PO_USER....</span>
<svg style="position:absolute;left:1244px;top:786px;overflow:visible" width="16" height="8" viewBox="0 0 16 8" ><linearGradient id="sg12" x1="0" y1="0" x2="0" y2="1"><stop offset="0" stop-color="#22a5e8"/><stop offset="1" stop-color="#1a56b4"/></linearGradient><path d="M0,0 L16,0 L8.2,8 L0,8 Z" fill="url(#sg12)"/><text x="0.6" y="6.4" font-family="Liberation Sans, sans-serif" font-size="6" font-weight="bold" fill="#fff" letter-spacing="-0.5">SAP</text></svg>
<span class="t " style="left:1265.9px;top:784px;letter-spacing:-0.691px;">SAP HANA</span>
<svg style="position:absolute;left:1106px;top:804.5px;overflow:visible" width="14" height="15" viewBox="0 0 14 15" ><path d="M5.17,3.17 L5.55,0.35 L8.45,0.35 L8.83,3.17 L9.83,3.75 L12.47,2.67 L13.92,5.18 L11.66,6.92 L11.66,8.08 L13.92,9.82 L12.47,12.33 L9.83,11.25 L8.83,11.83 L8.45,14.65 L5.55,14.65 L5.17,11.83 L4.17,11.25 L1.53,12.33 L0.08,9.82 L2.34,8.08 L2.34,6.92 L0.08,5.18 L1.53,2.67 L4.17,3.75 Z M9.00,7.50 A2.0,2.0 0 1 0 5.00,7.50 A2.0,2.0 0 1 0 9.00,7.50 Z" fill="#666666" fill-rule="evenodd" stroke="#666666" stroke-width="0.7" stroke-linejoin="round"/><circle cx="7" cy="7.5" r="2.0" fill="#fff"/></svg>
<span class="t " style="left:1127.4px;top:806px;letter-spacing:-0.681px;">BROKER_PO_USER....</span>
<svg style="position:absolute;left:1244px;top:808px;overflow:visible" width="16" height="8" viewBox="0 0 16 8" ><linearGradient id="sg13" x1="0" y1="0" x2="0" y2="1"><stop offset="0" stop-color="#22a5e8"/><stop offset="1" stop-color="#1a56b4"/></linearGradient><path d="M0,0 L16,0 L8.2,8 L0,8 Z" fill="url(#sg13)"/><text x="0.6" y="6.4" font-family="Liberation Sans, sans-serif" font-size="6" font-weight="bold" fill="#fff" letter-spacing="-0.5">SAP</text></svg>
<span class="t " style="left:1265.9px;top:806px;letter-spacing:-0.691px;">SAP HANA</span>
<svg style="position:absolute;left:1106px;top:826.5px;overflow:visible" width="14" height="15" viewBox="0 0 14 15" ><path d="M5.17,3.17 L5.55,0.35 L8.45,0.35 L8.83,3.17 L9.83,3.75 L12.47,2.67 L13.92,5.18 L11.66,6.92 L11.66,8.08 L13.92,9.82 L12.47,12.33 L9.83,11.25 L8.83,11.83 L8.45,14.65 L5.55,14.65 L5.17,11.83 L4.17,11.25 L1.53,12.33 L0.08,9.82 L2.34,8.08 L2.34,6.92 L0.08,5.18 L1.53,2.67 L4.17,3.75 Z M9.00,7.50 A2.0,2.0 0 1 0 5.00,7.50 A2.0,2.0 0 1 0 9.00,7.50 Z" fill="#666666" fill-rule="evenodd" stroke="#666666" stroke-width="0.7" stroke-linejoin="round"/><circle cx="7" cy="7.5" r="2.0" fill="#fff"/></svg>
<span class="t " style="left:1127.4px;top:828px;letter-spacing:-0.681px;">BROKER_PO_USER....</span>
<svg style="position:absolute;left:1244px;top:830px;overflow:visible" width="16" height="8" viewBox="0 0 16 8" ><linearGradient id="sg14" x1="0" y1="0" x2="0" y2="1"><stop offset="0" stop-color="#22a5e8"/><stop offset="1" stop-color="#1a56b4"/></linearGradient><path d="M0,0 L16,0 L8.2,8 L0,8 Z" fill="url(#sg14)"/><text x="0.6" y="6.4" font-family="Liberation Sans, sans-serif" font-size="6" font-weight="bold" fill="#fff" letter-spacing="-0.5">SAP</text></svg>
<span class="t " style="left:1265.9px;top:828px;letter-spacing:-0.691px;">SAP HANA</span>
</div></div>
</body></html>
